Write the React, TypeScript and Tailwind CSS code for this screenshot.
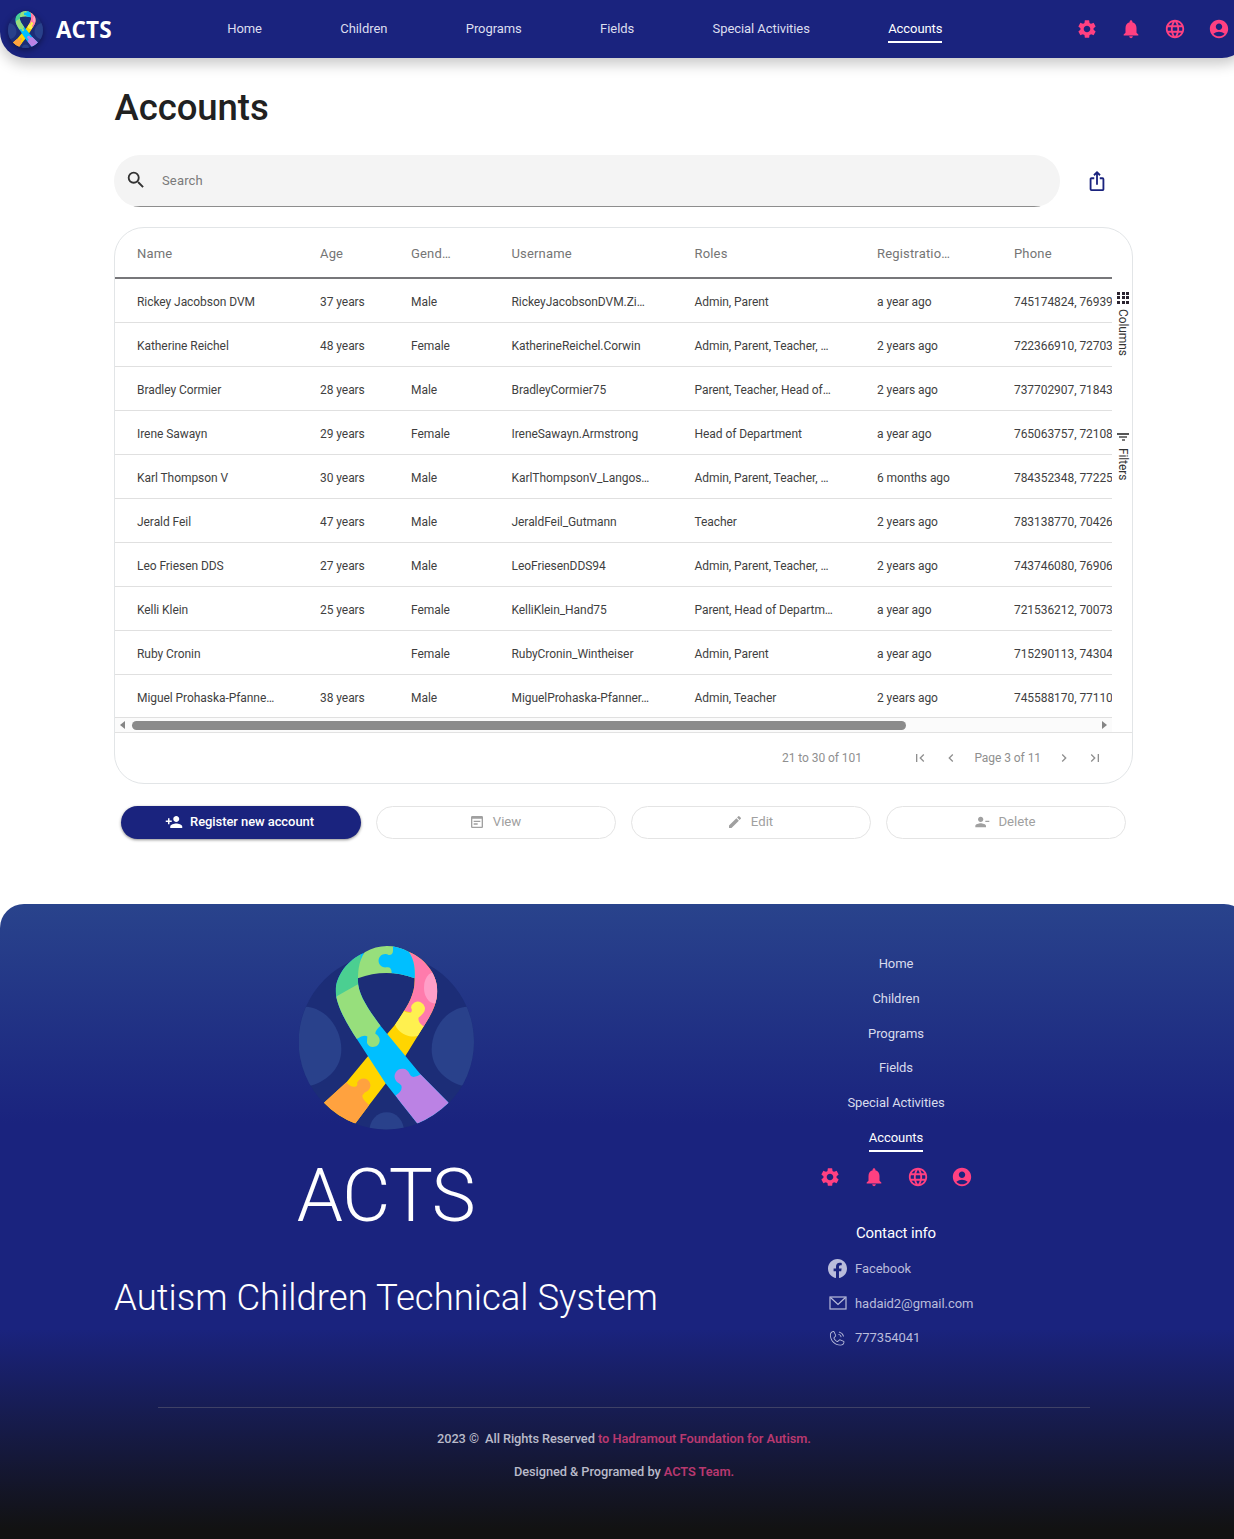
import React from "react";
import {
  MdSettings,
  MdNotifications,
  MdLanguage,
  MdAccountCircle,
  MdSearch,
  MdIosShare,
  MdPersonAdd,
  MdPersonRemove,
  MdWysiwyg,
  MdEdit,
  MdFirstPage,
  MdLastPage,
  MdChevronLeft,
  MdChevronRight,
} from "react-icons/md";
import { BsFacebook } from "react-icons/bs";
import { PiPhoneCallLight } from "react-icons/pi";

function Ribbon({ id, className }: { id: string; className: string }) {
  const disc = id + "-disc";
  const front = id + "-front";
  const back = id + "-back";
  const arch = id + "-arch";
  return (
    <svg viewBox="45 50 525 550" className={className} preserveAspectRatio="none">
      <defs>
        <clipPath id={disc}>
          <circle cx="307" cy="337" r="263" />
        </clipPath>
        <clipPath id={front}>
          <path d="M240 70C190 92 155 140 155 186C156 228 190 285 218 328L305 462L400 582Q450 562 494 520L410 435L290 290C250 235 218 190 222 145Z" />
        </clipPath>
        <clipPath id={back}>
          <path d="M375 68C430 92 460 140 460 186C458 230 440 258 415 297L365 378L305 462L255 527L214 582Q160 562 120 520L188 458L250 383L330 290C368 235 394 198 392 147Z" />
        </clipPath>
        <clipPath id={arch}>
          <path d="M222 147C222 118 228 88 242 69Q307 32 375 68C390 90 394 118 392 147Q307 115 222 147Z" />
        </clipPath>
      </defs>
      <circle cx="307" cy="337" r="263" fill="#1c2d77" />
      <g clipPath={"url(#" + disc + ")"} fill="#29418b">
        <path d="M30 232H68C130 238 172 300 172 360C172 412 135 452 82 468H30Z" />
        <path d="M590 232H547C485 238 443 300 443 360C443 412 480 452 532 468H590Z" />
        <ellipse cx="308" cy="605" rx="52" ry="57" />
      </g>
      <g clipPath={"url(#" + back + ")"}>
        <rect x="100" y="50" width="380" height="550" fill="#ffd500" />
        <path d="M340 50H480V320L416 294Q398 278 400 264L381 249L358 244L330 230Z" fill="#ff7bac" />
        <ellipse cx="452" cy="175" rx="32" ry="47" fill="#ff9fc8" />
        <path d="M333 285L357 243Q370 252 381 249Q386 242 381 235A21 21 0 1 1 418 251Q410 261 404 264Q400 278 420 292L403 320C380 325 345 316 333 285Z" fill="#fff04f" />
        <path d="M186 457Q198 474 214 472Q223 467 219 460A21 21 0 1 1 252 484Q241 488 235 498Q234 510 256 527L214 600H100V520Z" fill="#ffa23f" />
      </g>
      <g clipPath={"url(#" + front + ")"}>
        <rect x="140" y="50" width="380" height="550" fill="#00bfff" />
        <path d="M140 50H230V165L159 200H140Z" fill="#4bcf91" />
        <path d="M140 211L159 200L222 165L300 280L289 290Q274 302 274 313Q288 321 287 335A20 20 0 0 1 249 341Q249 330 250 321Q240 314 218 329L140 320Z" fill="#97df7c" />
        <path d="M335 498Q357 484 352 468L346 462A23 23 0 1 1 376 432Q380 442 388 443Q400 442 411 434L510 520L400 600Z" fill="#bb82e4" />
      </g>
      <g clipPath={"url(#" + arch + ")"}>
        <rect x="215" y="40" width="185" height="115" fill="#97df7c" />
        <path d="M327 40V65Q326 78 314 77A20 20 0 1 0 306 114Q323 110 323 131V155H400V40Z" fill="#00bfff" />
      </g>
    </svg>
  );
}

const nav = ["Home", "Children", "Programs", "Fields", "Special Activities", "Accounts"];

function PinkIcons() {
  return (
    <div className="flex gap-[22px] text-[22px] text-[#ff4081]">
      <MdSettings />
      <MdNotifications />
      <MdLanguage />
      <MdAccountCircle />
    </div>
  );
}

const grid = "grid grid-cols-[183px_91px_100.5px_183px_182.5px_137px_98.5px] pl-[22px]";
const heads = ["Name", "Age", "Gend…", "Username", "Roles", "Registratio…", "Phone"];
const rows = [
  ["Rickey Jacobson DVM", "37 years", "Male", "RickeyJacobsonDVM.Zi…", "Admin, Parent", "a year ago", "745174824, 76939"],
  ["Katherine Reichel", "48 years", "Female", "KatherineReichel.Corwin", "Admin, Parent, Teacher, …", "2 years ago", "722366910, 72703"],
  ["Bradley Cormier", "28 years", "Male", "BradleyCormier75", "Parent, Teacher, Head of…", "2 years ago", "737702907, 71843"],
  ["Irene Sawayn", "29 years", "Female", "IreneSawayn.Armstrong", "Head of Department", "a year ago", "765063757, 72108"],
  ["Karl Thompson V", "30 years", "Male", "KarlThompsonV_Langos…", "Admin, Parent, Teacher, …", "6 months ago", "784352348, 77225"],
  ["Jerald Feil", "47 years", "Male", "JeraldFeil_Gutmann", "Teacher", "2 years ago", "783138770, 70426"],
  ["Leo Friesen DDS", "27 years", "Male", "LeoFriesenDDS94", "Admin, Parent, Teacher, …", "2 years ago", "743746080, 76906"],
  ["Kelli Klein", "25 years", "Female", "KelliKlein_Hand75", "Parent, Head of Departm…", "a year ago", "721536212, 70073"],
  ["Ruby Cronin", "", "Female", "RubyCronin_Wintheiser", "Admin, Parent", "a year ago", "715290113, 74304"],
  ["Miguel Prohaska-Pfanne…", "38 years", "Male", "MiguelProhaska-Pfanner…", "Admin, Teacher", "2 years ago", "745588170, 77110"],
];

function Header() {
  return (
    <header className="flex h-[58.4px] items-center rounded-b-[26px] bg-[#1a237e] pl-2 shadow-[0_6px_14px_rgba(0,0,0,0.22)]">
      <Ribbon id="small" className="h-[37px] w-[35px] drop-shadow-[0_2px_3px_rgba(0,0,0,0.4)]" />
      <span className="ml-[13px] mt-[2px] w-[57px] font-['Open_Sans'] text-[22.5px] font-bold tracking-[0.1px] text-white">
        ACTS
      </span>
      <nav className="ml-[114.2px] flex gap-[78.4px] text-[13px] tracking-[-0.07px] text-[#dcdeee]">
        {nav.map((n) => (
          <a
            key={n}
            className={
              n === "Accounts"
                ? "whitespace-nowrap border-b-2 border-white pb-[2px] pt-[4px] leading-[20px] text-white"
                : "whitespace-nowrap pb-[4px] pt-[4px] leading-[20px]"
            }
          >
            {n}
          </a>
        ))}
      </nav>
      <div className="ml-auto mr-[18px]">
        <PinkIcons />
      </div>
    </header>
  );
}

function SideTools() {
  return (
    <div className="flex w-[20px] flex-col items-center pl-[2px] pt-[64px] text-[12px] tracking-[-0.1px] text-[#333]">
      <div className="grid grid-cols-3 gap-[1.5px]">
        {Array.from({ length: 9 }, (_, i) => (
          <i key={i} className="size-[3px] bg-[#2b2430]" />
        ))}
      </div>
      <span className="mt-[5px] h-[48px] leading-[20px] [writing-mode:vertical-rl]">Columns</span>
      <div className="mt-[76px] flex flex-col items-center gap-px">
        <i className="h-[2px] w-[12px] bg-[#555]" />
        <i className="h-[2px] w-[8px] bg-[#777]" />
        <i className="h-[2px] w-[3px] bg-[#777]" />
      </div>
      <span className="mt-[7px] leading-[20px] [writing-mode:vertical-rl]">Filters</span>
    </div>
  );
}

function Table() {
  return (
    <div className="mt-[20px] h-[557px] w-[1019px] overflow-hidden rounded-[30px] border border-[#e2e5e7]">
      <div className="flex h-[505px] border-b border-[#e2e2e2]">
        <div className="w-[998px] overflow-hidden">
          <div className={grid + " h-[51.5px] border-b-2 border-[#77777a] text-[13px] leading-[51px] tracking-[0.17px] text-[#757575]"}>
            {heads.map((h) => (
              <span key={h}>{h}</span>
            ))}
          </div>
          {rows.map((r) => (
            <div key={r[0]} className={grid + " h-[43.9px] border-b border-[#e0e0e0] text-[12px] leading-[46.6px] tracking-[-0.06px] text-[#3f3f3f]"}>
              {r.map((c, i) => (
                <span key={i} className="whitespace-nowrap">
                  {c}
                </span>
              ))}
            </div>
          ))}
          <div className="flex h-[14px] items-center bg-[#fbfbfb] px-[5px]">
            <i className="border-y-[4px] border-r-[5px] border-y-transparent border-r-[#858585]" />
            <i className="ml-[7px] h-[9px] w-[774px] rounded-full bg-[#8b8b8b]" />
            <i className="ml-auto border-y-[4px] border-l-[5px] border-y-transparent border-l-[#858585]" />
          </div>
        </div>
        <SideTools />
      </div>
      <div className="flex h-[50px] items-center justify-end pr-[29px] text-[12px] tracking-[-0.06px] text-[#8f8f8f]">
        <span className="mr-[50px]">21 to 30 of 101</span>
        <MdFirstPage className="mr-[15.5px] text-[16px]" />
        <MdChevronLeft className="mr-[15px] text-[16px]" />
        <span>Page 3 of 11</span>
        <MdChevronRight className="ml-[15px] text-[16px]" />
        <MdLastPage className="ml-[15px] text-[16px]" />
      </div>
    </div>
  );
}

function Actions() {
  const ghost = "flex h-[33px] items-center justify-center gap-[8px] rounded-full border border-[#e4e4e4] pb-[2px] pr-[2px] text-[13.2px] text-[#a0a0a0]";
  return (
    <div className="mt-[22px] grid w-[1005px] translate-x-[7px] grid-cols-4 gap-[15px] text-[13px]">
      <button className="flex h-[33px] items-center justify-center gap-[7px] rounded-full bg-[#1a237e] pb-[2px] pr-[3px] font-medium tracking-[-0.08px] text-white shadow-[0_1px_3px_rgba(0,0,0,0.45)]">
        <MdPersonAdd className="mt-[2px] text-[18px]" />
        Register new account
      </button>
      <button className={ghost}>
        <MdWysiwyg className="mt-[2px] text-[16px]" />
        View
      </button>
      <button className={ghost}>
        <MdEdit className="mt-[2px] text-[16px]" />
        Edit
      </button>
      <button className={ghost}>
        <MdPersonRemove className="mt-[2px] text-[16px]" />
        Delete
      </button>
    </div>
  );
}

function MailIcon() {
  return (
    <svg viewBox="0 0 18 14" className="h-[14px] w-[18px]" fill="none" stroke="currentColor" strokeWidth="1.2">
      <rect x="1" y="1" width="16" height="12" />
      <path d="M1.5 1.5L9 8.5L16.5 1.5" />
    </svg>
  );
}

function Footer() {
  return (
    <footer className="mt-[65px] h-[636px] rounded-t-[24px] bg-[linear-gradient(180deg,#29438c_0px,#1a237e_220px,#1a237e_425px,#121212_625px)] text-white">
      <div className="flex h-[503px]">
        <div className="ml-[114px] flex w-[544px] flex-col items-center pt-[42.5px] font-light">
          <Ribbon id="large" className="h-[183.5px] w-[175px]" />
          <div className="mt-[21.5px] text-[74px] leading-[90px] tracking-[-0.5px]">ACTS</div>
          <div className="mt-[32.5px] whitespace-nowrap text-[36.5px] leading-[48px]">Autism Children Technical System</div>
        </div>
        <div className="ml-[138px] flex w-[200px] flex-col items-center pt-[43.2px]">
          {nav.map((n) => (
            <a
              key={n}
              className={
                n === "Accounts"
                  ? "h-[31.5px] border-b-2 border-white text-[13px] leading-[34.7px] tracking-[-0.07px]"
                  : "h-[34.7px] text-[13px] leading-[34.7px] tracking-[-0.07px] text-[#d8dbec]"
              }
            >
              {n}
            </a>
          ))}
          <div className="mt-[14px]">
            <PinkIcons />
          </div>
          <div className="mt-[32.5px] text-[15px] leading-[24px] tracking-[-0.15px]">Contact info</div>
          <div className="mt-[6.7px] w-[136px] text-[13px] tracking-[-0.05px] text-[#b9bcdb]">
            {[
              { icon: <BsFacebook className="text-[19px]" />, text: "Facebook" },
              { icon: <MailIcon />, text: "hadaid2@gmail.com" },
              { icon: <PiPhoneCallLight className="text-[20px]" />, text: "777354041" },
            ].map((c) => (
              <div key={c.text} className="flex h-[34.7px] items-center gap-[8px]">
                <span className="flex w-[19px] shrink-0 justify-center">{c.icon}</span>
                <span>{c.text}</span>
              </div>
            ))}
          </div>
        </div>
      </div>
      <div className="mx-auto w-[932px] border-t border-[#3f4166]" />
      <div className="mt-[14px] text-center text-[12.8px] font-medium leading-[33px] text-[#b9bac9]">
        <p className="tracking-[-0.08px]">
          2023 ©&nbsp; All Rights Reserved{" "}
          <span className="font-semibold tracking-[-0.02px] text-[#b8386f]">to Hadramout Foundation for Autism.</span>
        </p>
        <p className="tracking-[-0.06px]">
          Designed &amp; Programed by <span className="font-semibold text-[#b8386f]">ACTS Team.</span>
        </p>
      </div>
    </footer>
  );
}

export default function App() {
  return (
    <div className="h-[1539px] w-full overflow-hidden bg-white font-['Roboto',sans-serif]">
      <div className="w-[1248px]">
        <Header />
        <main className="ml-[114px] w-[1019px]">
          <h1 className="mt-[25.6px] pl-[0.5px] text-[36.5px] font-medium leading-[48px] tracking-[-0.05px] text-[#212121]">Accounts</h1>
          <div className="mt-[23px] flex items-center">
            <div className="h-[52px] w-[946px] overflow-hidden rounded-[26px] bg-[#f4f4f4] text-[13px] tracking-[0.15px] text-[#7a7a7a]">
              <div className="flex h-[52px] items-center border-b border-[#8d8d8d] pl-[11px]">
                <MdSearch className="mr-[15px] text-[22px] text-[#333]" />
                Search
              </div>
            </div>
            <MdIosShare className="ml-[26px] text-[22px] text-[#1a237e]" />
          </div>
          <Table />
          <Actions />
        </main>
        <Footer />
      </div>
    </div>
  );
}
